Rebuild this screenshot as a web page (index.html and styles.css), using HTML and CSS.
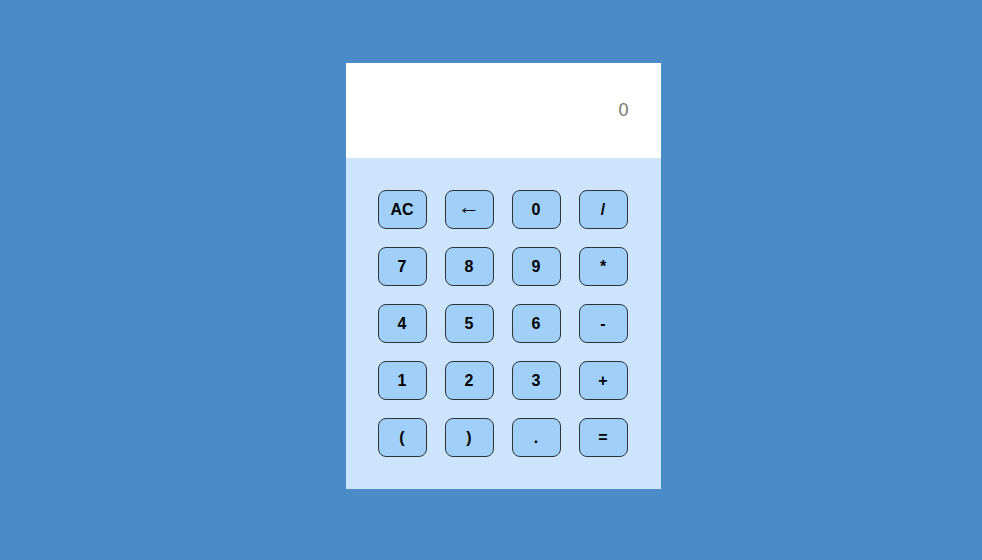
FILE: index.html
```html
<!DOCTYPE html>
<html lang="en">
<head>
<meta charset="utf-8">
<title>Calculator</title>
<link rel="stylesheet" href="styles.css">
</head>
<body>
<div class="calculator">
  <div class="display">0</div>
  <div class="keypad">
    <button class="key">AC</button>
    <button class="key key-arrow">&larr;</button>
    <button class="key">0</button>
    <button class="key">/</button>
    <button class="key">7</button>
    <button class="key">8</button>
    <button class="key">9</button>
    <button class="key">*</button>
    <button class="key">4</button>
    <button class="key">5</button>
    <button class="key">6</button>
    <button class="key">-</button>
    <button class="key">1</button>
    <button class="key">2</button>
    <button class="key">3</button>
    <button class="key">+</button>
    <button class="key">(</button>
    <button class="key">)</button>
    <button class="key">.</button>
    <button class="key">=</button>
  </div>
</div>
</body>
</html>
```
FILE: styles.css
```css
html, body {
  margin: 0;
  padding: 0;
}
body {
  background: #4b8bc8;
  width: 982px;
  height: 560px;
  font-family: "Liberation Sans", Arial, sans-serif;
  display: flex;
  justify-content: center;
  align-items: flex-start;
  padding-top: 63px;
  padding-left: 24px;
  box-sizing: border-box;
}
.calculator {
  width: 315px;
}
.display {
  height: 95px;
  background: #ffffff;
  display: flex;
  align-items: center;
  justify-content: flex-end;
  padding-right: 32px;
  font-size: 18px;
  color: #7a756f;
  box-sizing: border-box;
}
.keypad {
  background: #cce5fc;
  display: grid;
  grid-template-columns: repeat(4, 49px);
  grid-auto-rows: 39px;
  gap: 18px;
  padding: 32px 33px 32px 32px;
}
.key {
  margin: 0;
  padding: 0;
  background: #a0cff9;
  border: 1px solid #2e3338;
  border-radius: 8px;
  font-family: "Liberation Sans", Arial, sans-serif;
  font-weight: bold;
  font-size: 16px;
  color: #000;
}
.key-arrow {
  font-weight: normal;
  font-size: 22px;
  line-height: 1;
  padding-bottom: 5px;
}
```
